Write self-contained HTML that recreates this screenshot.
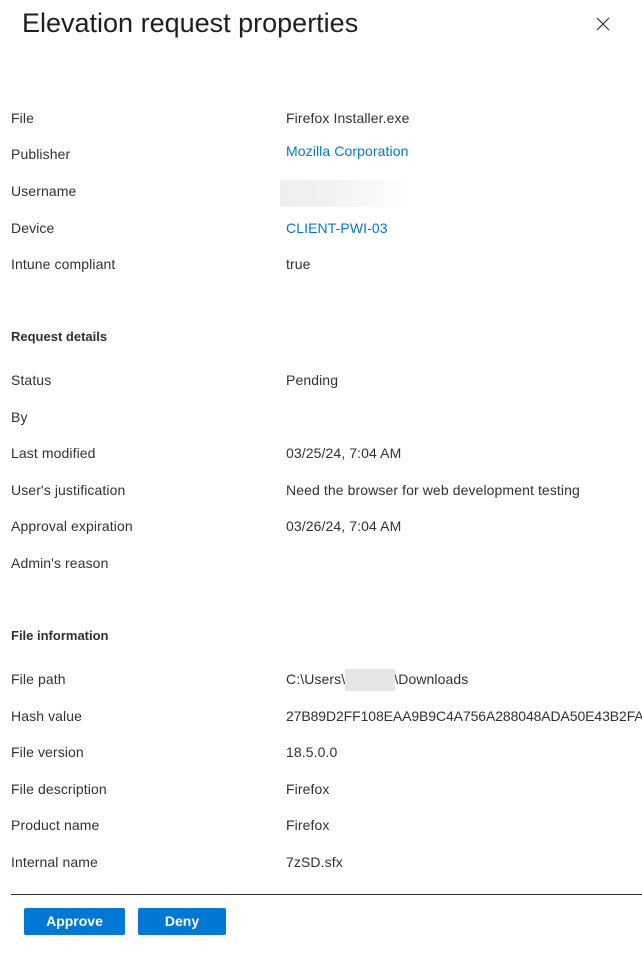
<!DOCTYPE html>
<html><head><style>
body{margin:0;width:642px;height:968px;background:#fff;font-family:"Liberation Sans",sans-serif;color:#323130;overflow:hidden;position:relative}
.t{position:absolute;font-size:14px;line-height:16px;white-space:nowrap;letter-spacing:0.1px;margin-top:1px}
.l{left:11px}.v{left:286px}
.a{color:#0078d4}
.b{font-weight:bold;font-size:13px;letter-spacing:0}
h1{position:absolute;left:22px;top:6px;margin:0;font-weight:normal;font-size:27px;line-height:34px;color:#201f1e;letter-spacing:0}
.btn{position:absolute;top:908px;height:27px;background:#0078d4;color:#fff;font-weight:bold;font-size:14px;line-height:26px;text-align:center;border-radius:2px}
</style></head><body>
<h1>Elevation request properties</h1>
<svg style="position:absolute;left:596px;top:17px" width="14" height="14" viewBox="0 0 14 14"><path d="M1 1L13 13M13 1L1 13" stroke="#323130" stroke-width="1.2"/></svg>

<div class="t l" style="top:109px">File</div><div class="t v" style="top:109px">Firefox Installer.exe</div>
<div class="t l" style="top:145px">Publisher</div><div class="t v a" style="top:142px">Mozilla Corporation</div>
<div class="t l" style="top:182px">Username</div>
<div style="position:absolute;left:280px;top:180px;width:130px;height:27px;background:linear-gradient(90deg,#eee,#f2f2f2 40%,#fff)"></div>
<div class="t l" style="top:219px">Device</div><div class="t v a" style="top:219px">CLIENT-PWI-03</div>
<div class="t l" style="top:255px">Intune compliant</div><div class="t v" style="top:255px">true</div>

<div class="t l b" style="top:328px">Request details</div>
<div class="t l" style="top:371px">Status</div><div class="t v" style="top:371px">Pending</div>
<div class="t l" style="top:408px">By</div>
<div class="t l" style="top:444px">Last modified</div><div class="t v" style="top:444px">03/25/24, 7:04 AM</div>
<div class="t l" style="top:481px">User's justification</div><div class="t v" style="top:481px">Need the browser for web development testing</div>
<div class="t l" style="top:517px">Approval expiration</div><div class="t v" style="top:517px">03/26/24, 7:04 AM</div>
<div class="t l" style="top:554px">Admin's reason</div>

<div class="t l b" style="top:627px">File information</div>
<div class="t l" style="top:670px">File path</div>
<div class="t v" style="top:670px">C:\Users\<span style="display:inline-block;width:49px"></span>\Downloads</div>
<div style="position:absolute;left:345px;top:669px;width:50px;height:22px;background:#e6e6e6"></div>
<div class="t l" style="top:707px">Hash value</div><div class="t v" style="top:707px;letter-spacing:-0.1px">27B89D2FF108EAA9B9C4A756A288048ADA50E43B2FA0E</div>
<div class="t l" style="top:743px">File version</div><div class="t v" style="top:743px">18.5.0.0</div>
<div class="t l" style="top:780px">File description</div><div class="t v" style="top:780px">Firefox</div>
<div class="t l" style="top:816px">Product name</div><div class="t v" style="top:816px">Firefox</div>
<div class="t l" style="top:853px">Internal name</div><div class="t v" style="top:853px">7zSD.sfx</div>

<div style="position:absolute;left:11px;top:894px;width:631px;height:1px;background:#323130"></div>
<div class="btn" style="left:24px;width:101px">Approve</div>
<div class="btn" style="left:138px;width:88px">Deny</div>
</body></html>
